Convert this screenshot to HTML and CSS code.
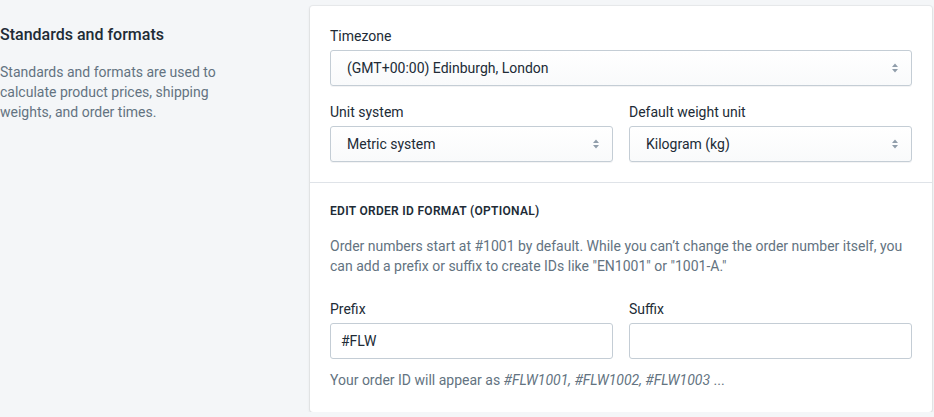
FILE: index.html
```html
<!DOCTYPE html>
<html lang="en">
<head>
    <meta charset="UTF-8">
    <meta name="viewport" content="width=device-width, initial-scale=1.0">
    <title>Standards and formats</title>
    <link rel="stylesheet" href="styles.css">
</head>
<body>
    <div class="layout">
        <div class="annotation">
            <h2 class="annotation-title">Standards and formats</h2>
            <p class="annotation-text">Standards and formats are used to calculate product prices, shipping weights, and order times.</p>
        </div>

        <div class="card">
            <div class="card-section">
                <div class="form-group">
                    <label for="timezone">Timezone</label>
                    <div class="select">
                        <select id="timezone">
                            <option>(GMT+00:00) Edinburgh, London</option>
                        </select>
                        <svg class="select-arrow" width="8" height="12" viewBox="0 0 8 12"><path d="M4 1.5 L7 5 H1 Z M4 10.5 L7 7 H1 Z" fill="#919eab"/></svg>
                    </div>
                </div>
                <div class="form-row">
                    <div class="form-group">
                        <label for="unit-system">Unit system</label>
                        <div class="select">
                            <select id="unit-system">
                                <option>Metric system</option>
                            </select>
                            <svg class="select-arrow" width="8" height="12" viewBox="0 0 8 12"><path d="M4 1.5 L7 5 H1 Z M4 10.5 L7 7 H1 Z" fill="#919eab"/></svg>
                        </div>
                    </div>
                    <div class="form-group">
                        <label for="weight-unit">Default weight unit</label>
                        <div class="select">
                            <select id="weight-unit">
                                <option>Kilogram (kg)</option>
                            </select>
                            <svg class="select-arrow" width="8" height="12" viewBox="0 0 8 12"><path d="M4 1.5 L7 5 H1 Z M4 10.5 L7 7 H1 Z" fill="#919eab"/></svg>
                        </div>
                    </div>
                </div>
            </div>

            <div class="card-section">
                <h3 class="subheading">Edit order ID format (optional)</h3>
                <p class="section-text">Order numbers start at #1001 by default. While you can’t change the order number itself, you can add a prefix or suffix to create IDs like "EN1001" or "1001-A."</p>
                <div class="form-row">
                    <div class="form-group">
                        <label for="prefix">Prefix</label>
                        <input type="text" id="prefix" value="#FLW">
                    </div>
                    <div class="form-group">
                        <label for="suffix">Suffix</label>
                        <input type="text" id="suffix" value="">
                    </div>
                </div>
                <p class="help-text">Your order ID will appear as <em>#FLW1001, #FLW1002, #FLW1003</em> ...</p>
            </div>
        </div>
    </div>
</body>
</html>
```

FILE: styles.css
```css
body {
    margin: 0;
    background-color: #f4f6f8;
    font-family: Roboto, "Liberation Sans", sans-serif;
    font-size: 14px;
    line-height: 20px;
    color: #212b36;
}
.layout {
    display: flex;
    gap: 20px;
    padding-top: 6px;
    padding-right: 2px;
}
.annotation {
    width: 290px;
    flex-shrink: 0;
    padding-top: 17px;
}
.annotation-title {
    margin: 0 0 15px;
    font-size: 16px;
    line-height: 24px;
    font-weight: 500;
}
.annotation-text {
    width: 225px;
    margin: 0;
    color: #637381;
}
.card {
    flex: 1;
    background-color: #fff;
    border-radius: 3px;
    box-shadow: 0 0 0 1px rgba(63, 63, 68, 0.05), 0 1px 3px 0 rgba(63, 63, 68, 0.15);
}
.card-section {
    padding: 20px;
}
.card-section + .card-section {
    border-top: 1px solid #dfe3e8;
    padding-bottom: 22px;
}
.form-row {
    display: grid;
    grid-template-columns: 1fr 1fr;
    gap: 16px;
}
.form-group + .form-row,
.form-row + .form-row {
    margin-top: 16px;
}
label {
    display: block;
    margin-bottom: 4px;
}
.select {
    position: relative;
}
select {
    appearance: none;
    display: block;
    width: 100%;
    height: 36px;
    margin: 0;
    padding: 0 32px 0 16px;
    border: 1px solid #c4cdd5;
    border-radius: 3px;
    background: linear-gradient(to bottom, #fff, #f9fafb);
    box-shadow: 0 1px 0 0 rgba(22, 29, 37, 0.05);
    font: inherit;
    color: #212b36;
}
.select-arrow {
    position: absolute;
    right: 13px;
    top: 12px;
    pointer-events: none;
}
input[type="text"] {
    display: block;
    width: 100%;
    height: 36px;
    margin: 0;
    padding: 0 10px;
    border: 1px solid #c4cdd5;
    border-radius: 3px;
    box-sizing: border-box;
    font: inherit;
    color: #212b36;
}
.subheading {
    margin: 0 0 17px;
    font-size: 12px;
    line-height: 16px;
    font-weight: 600;
    letter-spacing: 0.3px;
    text-transform: uppercase;
}
.section-text {
    margin: 0 0 23px;
    color: #637381;
}
.help-text {
    margin: 11px 0 0;
    color: #637381;
}
```
